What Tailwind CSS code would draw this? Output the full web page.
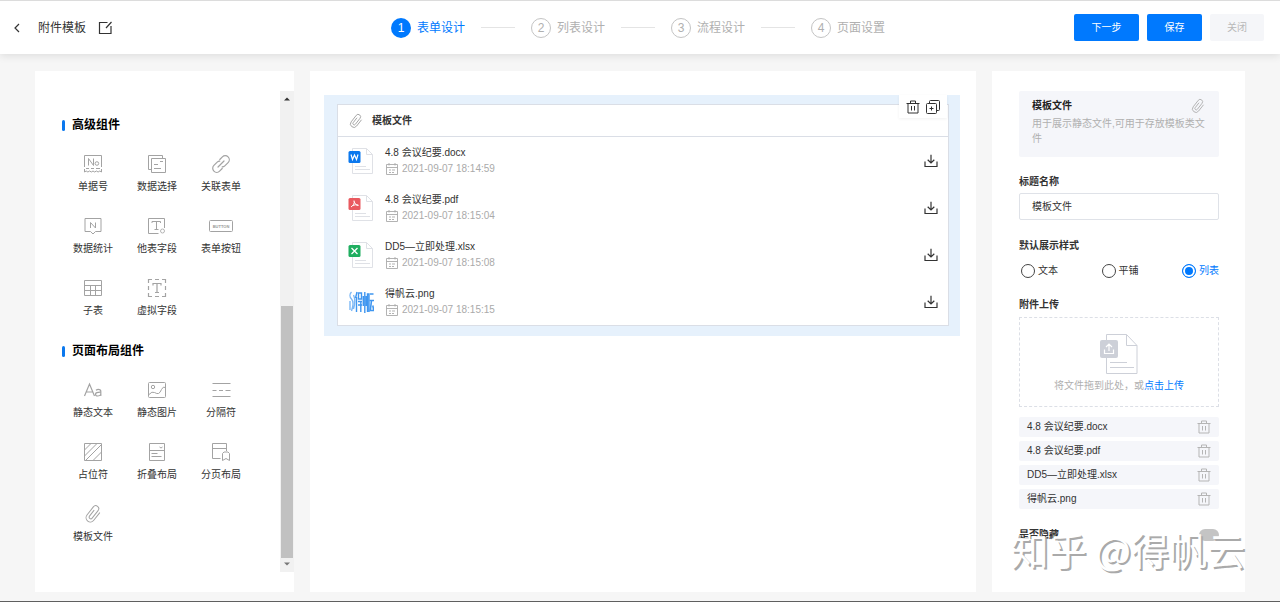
<!DOCTYPE html>
<html lang="zh-CN">
<head>
<meta charset="utf-8">
<meta name="viewport" content="width=device-width, initial-scale=1">
<title>附件模板 - 表单设计</title>
<script src="https://cdn.jsdelivr.net/npm/@tailwindcss/browser@4"></script>
</head>
<body class="flex min-h-screen flex-col border-t border-b border-t-[#dcdcdc] border-b-[#5f5f5f] bg-[#f6f6f6] font-['Liberation_Sans','Noto_Sans_CJK_SC',sans-serif] text-[10px] leading-4 text-[#333]">

<svg class="hidden" aria-hidden="true">
  <symbol id="clip" viewBox="0 0 20 20"><path transform="rotate(38 10 10)" d="M14.500 5v9.500a4.300 4.300 0 0 1-8.600 0V4.200a3 3 0 0 1 6 0v9.600a1.700 1.700 0 0 1-3.400 0V6.500" fill="none" stroke="currentColor" stroke-linecap="round"/></symbol>
  <symbol id="trash" viewBox="0 0 14 14"><path d="M.5 3.500h13M4.500 3.500v-2.500h5v2.500M2 3.500v9.500h10v-9.500M5.500 6v4.500M8.500 6v4.500" fill="none" stroke="currentColor"/></symbol>
  <symbol id="cal" viewBox="0 0 14 14"><path d="M1.500 2.500h11v10h-11zM1.500 5.500h11M4 1v2.500M10 1v2.500M4 8h2M7 8h3M4 10.500h2M7 10.500h2" fill="none" stroke="currentColor" stroke-width=".9"/></symbol>
  <symbol id="down" viewBox="0 0 14 14"><path d="M7 .8v7.700M3.700 5.800L7 9l3.300-3.200M1 7.500v5h12v-5" fill="none" stroke="currentColor" stroke-width="1.200"/></symbol>
  <symbol id="page" viewBox="0 0 26 28"><path d="M4.500 1.500h14l6 6v19h-20zM18.500 1.500v6h6M7 19.500h11M7 22.500h15" fill="#fff" stroke="#dfe1e6"/></symbol>
</svg>

<header class="grid h-[53px] shrink-0 grid-cols-[1fr_auto_1fr] items-center bg-white pl-3 pr-4 shadow-[0_2px_8px_rgba(0,0,0,0.1)]">
  <div class="flex items-center text-xs">
    <button type="button" aria-label="返回" class="py-1 pr-1"><svg class="size-2.5" viewBox="0 0 10 10" fill="none" stroke="#333" stroke-width="1.200"><path d="M7 1L3 5l4 4"/></svg></button>
    <h1 class="ml-3">附件模板</h1>
    <button type="button" aria-label="重命名" class="ml-3"><svg class="size-4" viewBox="0 0 16 16" fill="none" stroke="#333" stroke-width="1.200"><path d="M9.500 2.500h-8v11h11.500V6M8 8l5.500-6"/></svg></button>
  </div>
  <ol class="flex items-center gap-4 text-xs text-[#b0b0b0]">
    <li class="flex items-center gap-1.5 text-[#0079fe]"><span class="flex size-5 items-center justify-center rounded-full bg-[#0079fe] text-white">1</span>表单设计</li>
    <li aria-hidden="true" class="h-px w-[34px] bg-[#e4e4e4]"></li>
    <li class="flex items-center gap-1.5"><span class="flex size-5 items-center justify-center rounded-full border border-[#c4c4c4]">2</span>列表设计</li>
    <li aria-hidden="true" class="h-px w-[34px] bg-[#e4e4e4]"></li>
    <li class="flex items-center gap-1.5"><span class="flex size-5 items-center justify-center rounded-full border border-[#c4c4c4]">3</span>流程设计</li>
    <li aria-hidden="true" class="h-px w-[34px] bg-[#e4e4e4]"></li>
    <li class="flex items-center gap-1.5"><span class="flex size-5 items-center justify-center rounded-full border border-[#c4c4c4]">4</span>页面设置</li>
  </ol>
  <div class="flex items-center justify-end gap-2">
    <button type="button" class="h-[27px] w-[65px] rounded-xs bg-[#0079fe] text-white">下一步</button>
    <button type="button" class="h-[27px] w-[55px] rounded-xs bg-[#0079fe] text-white">保存</button>
    <button type="button" class="h-[27px] w-[54px] rounded-xs bg-[#f5f6f9] text-[#b8b8b8]">关闭</button>
  </div>
</header>

<main class="flex flex-1 gap-4 px-[35px] pt-[17px] pb-[9px]">

  <aside class="flex w-[259px] shrink-0 justify-between bg-white py-5">
    <div class="pt-6 pl-[26px]">
      <h2 class="flex h-5 items-center gap-[7px] pl-px text-xs font-bold text-black"><span class="h-[11px] w-[3px] rounded-xs bg-[#0b78ee]"></span>高级组件</h2>
      <ul class="mt-[19px] grid w-48 grid-cols-3 gap-y-[21px] text-center">
        <li class="flex flex-col items-center gap-[5px]"><svg class="size-5" viewBox="0 0 20 20" fill="none" stroke="#a3a3a3"><path d="M1.500 13V1.500h17V13M1.500 15v3q1.700-2 3.400 0 1.700-2 3.400 0 1.700-2 3.400 0 1.700-2 3.400 0 1.700-2 3.400 0V15M3 14.500h3M8 14.500h3M13 14.500h4M5.500 11.500V4.500l5 7V4.500"/><circle cx="13.900" cy="9.500" r="1.800"/></svg>单据号</li>
        <li class="flex flex-col items-center gap-[5px]"><svg class="size-5" viewBox="0 0 20 20" fill="none" stroke="#a3a3a3"><path d="M4.500 4.500h14v14h-14zM4.500 15.500h-3v-14h14v3M7 10.500h4M7 14.500h7M13 7.500h3"/></svg>数据选择</li>
        <li class="flex flex-col items-center gap-[5px]"><svg class="size-5" viewBox="0 0 20 20" fill="none" stroke="#a3a3a3" stroke-width="1.200" stroke-linecap="round"><path d="M8.800 5.500l2.600-2.600a4 4 0 0 1 5.700 5.700l-3.300 3.300a3.600 3.600 0 0 1-2.600 1M11.200 14.500l-2.600 2.600a4 4 0 0 1-5.700-5.700l3.300-3.300a3.600 3.600 0 0 1 2.600-1M7 13l6-6"/></svg>关联表单</li>
        <li class="flex flex-col items-center gap-[5px]"><svg class="size-5" viewBox="0 0 20 20" fill="none" stroke="#a3a3a3"><path d="M2 2.500h16v13h-5.500L10 18l-2.500-2.500H2zM7.500 12V6.500l5 5.500V6.500"/></svg>数据统计</li>
        <li class="flex flex-col items-center gap-[5px]"><svg class="size-5" viewBox="0 0 20 20" fill="none" stroke="#a3a3a3"><path d="M17.500 12V2.500h-16v15h10M5 7V5.500h8.500V7M9.500 5.500v8M7.500 13.500h4"/><circle cx="15.500" cy="15" r="2" stroke-width=".8"/></svg>他表字段</li>
        <li class="flex flex-col items-center gap-[5px]"><svg class="h-5 w-6" viewBox="0 0 24 20" fill="none" stroke="#a3a3a3"><rect x=".5" y="4.500" width="23" height="11" rx="1"/><text x="12" y="12" text-anchor="middle" font-size="4" font-weight="bold" fill="#999" stroke="none">BUTTON</text></svg>表单按钮</li>
        <li class="flex flex-col items-center gap-[5px]"><svg class="size-5" viewBox="0 0 20 20" fill="none" stroke="#a3a3a3"><path d="M1.500 2.500h17v15h-17zM1.500 7.500h17M1.500 12.500h17M7.500 7.500v10M12.500 7.500v10"/></svg>子表</li>
        <li class="flex flex-col items-center gap-[5px]"><svg class="size-5" viewBox="0 0 20 20" fill="none" stroke="#a3a3a3" stroke-width="1.200"><path d="M1.500 5V1.500H5M8 1.500h4M15 1.500h3.500V5M18.500 8v4M18.500 15v3.500H15M12 18.500H8M5 18.500H1.500V15M1.500 12V8M6 7.500V5.500h8v2M10 5.500v9M8 14.500h4"/></svg>虚拟字段</li>
      </ul>
      <h2 class="mt-[22px] flex h-5 items-center gap-[7px] pl-px text-xs font-bold text-black"><span class="h-[11px] w-[3px] rounded-xs bg-[#0b78ee]"></span>页面布局组件</h2>
      <ul class="mt-[19px] grid w-48 grid-cols-3 gap-y-[21px] text-center">
        <li class="flex flex-col items-center gap-[5px]"><svg class="size-5" viewBox="0 0 20 20" fill="none" stroke="#a3a3a3" stroke-width="1.200"><path d="M1.500 16L6.500 4 11.500 16M3.200 12h6.600M13 10.300q2.200-1.800 4.300-.3.500.6.500 1.500V16"/><path d="M17.800 12.200q-5.300-.2-5.300 2 0 1.800 2.300 1.800 2 0 3-1.500"/></svg>静态文本</li>
        <li class="flex flex-col items-center gap-[5px]"><svg class="size-5" viewBox="0 0 20 20" fill="none" stroke="#a3a3a3"><rect x="1.500" y="2.500" width="17" height="15" rx="1"/><circle cx="6" cy="7" r="1.700"/><path d="M2 14.500q3-3.500 5.500-2t4 1 3-4 4-2"/></svg>静态图片</li>
        <li class="flex flex-col items-center gap-[5px]"><svg class="size-5" viewBox="0 0 20 20" fill="none" stroke="#a3a3a3"><path d="M1.500 3.500h18M1.500 10.500h4M8 10.500h4M14.500 10.500h5M1.500 16.500h18"/></svg>分隔符</li>
        <li class="flex flex-col items-center gap-[5px]"><svg class="size-5" viewBox="0 0 20 20" fill="none" stroke="#a3a3a3"><path d="M1.500 1.500h17v17h-17zM1.500 8L8 1.500M1.500 14L14 1.500M3 18L18 3M10 18.500l8.500-8.500"/></svg>占位符</li>
        <li class="flex flex-col items-center gap-[5px]"><svg class="size-5" viewBox="0 0 20 20" fill="none" stroke="#a3a3a3"><path d="M2.500 1.500h15v17h-15zM2.500 8.500h15M12.500 5l1.500 1 1.500-1M4.500 11.500h6M4.500 14.500h10"/></svg>折叠布局</li>
        <li class="flex flex-col items-center gap-[5px]"><svg class="size-5" viewBox="0 0 20 20" fill="none" stroke="#a3a3a3"><path d="M9.500 16.500h-8v-15h14V9M1.500 6.500h14M11.500 18.500v-7l1.500-1.500h4l1.500 1.500v7l-3.500-2z"/></svg>分页布局</li>
        <li class="flex flex-col items-center gap-[5px]"><svg class="size-5 text-[#a3a3a3]"><use href="#clip"/></svg>模板文件</li>
      </ul>
    </div>
    <div aria-hidden="true" class="flex w-3.5 flex-col items-center bg-[#f1f1f1] py-1.5">
      <svg class="h-1 w-1.5" viewBox="0 0 6 4"><path d="M0 3.500L3 .5l3 3z" fill="#333"/></svg>
      <div class="mt-[205px] w-3 flex-1 bg-[#c1c1c1]"></div>
      <svg class="mt-1 h-1 w-1.5" viewBox="0 0 6 4"><path d="M0 .5l3 3 3-3z" fill="#777"/></svg>
    </div>
  </aside>

  <section class="min-w-0 flex-1 bg-white pt-6 pr-4 pl-3.5">
    <div class="relative bg-[#e6f1fc] pt-[9px] pr-[11px] pb-2.5 pl-[13px]">
      <div class="border border-[#dadee6] bg-white">
        <h3 class="flex h-8 items-center gap-2 border-b border-[#dadee6] pl-2.5 font-bold"><svg class="size-4 text-[#999]"><use href="#clip"/></svg>模板文件</h3>
        <ul>
          <li class="flex h-[47px] items-center pr-2.5 pl-2.5">
            <svg class="h-7 w-[26px]"><use href="#page"/><rect x=".5" y="4" width="12" height="12" rx="1.500" fill="#0b78ee"/><path d="M3 7.500l1.500 5 2-4.500 2 4.500 1.500-5" fill="none" stroke="#fff" stroke-width="1.200"/></svg>
            <div class="ml-[11px] flex-1"><p>4.8 会议纪要.docx</p><p class="flex items-center gap-[3px] text-[#aaa]"><svg class="size-3.5"><use href="#cal"/></svg>2021-09-07 18:14:59</p></div>
            <button type="button" aria-label="下载 4.8 会议纪要.docx"><svg class="size-3.5"><use href="#down"/></svg></button>
          </li>
          <li class="flex h-[47px] items-center pr-2.5 pl-2.5">
            <svg class="h-7 w-[26px]"><use href="#page"/><rect x=".5" y="4" width="12" height="12" rx="1.500" fill="#e95a60"/><path d="M6 6.500c1 3-1 5-3 6.500M6.200 7.500c.5 2 2 4 4.300 4M4.300 11.700q3-1.500 6-.7" fill="none" stroke="#fff"/></svg>
            <div class="ml-[11px] flex-1"><p>4.8 会议纪要.pdf</p><p class="flex items-center gap-[3px] text-[#aaa]"><svg class="size-3.5"><use href="#cal"/></svg>2021-09-07 18:15:04</p></div>
            <button type="button" aria-label="下载 4.8 会议纪要.pdf"><svg class="size-3.5"><use href="#down"/></svg></button>
          </li>
          <li class="flex h-[47px] items-center pr-2.5 pl-2.5">
            <svg class="h-7 w-[26px]"><use href="#page"/><rect x=".5" y="4" width="12" height="12" rx="1.500" fill="#1fae60"/><path d="M3.500 7l6 6M9.500 7l-6 6" fill="none" stroke="#fff" stroke-width="1.300"/></svg>
            <div class="ml-[11px] flex-1"><p>DD5—立即处理.xlsx</p><p class="flex items-center gap-[3px] text-[#aaa]"><svg class="size-3.5"><use href="#cal"/></svg>2021-09-07 18:15:08</p></div>
            <button type="button" aria-label="下载 DD5—立即处理.xlsx"><svg class="size-3.5"><use href="#down"/></svg></button>
          </li>
          <li class="flex h-[47px] items-center pr-2.5 pl-2.5">
            <svg class="h-7 w-[26px]" viewBox="0 0 26 28" fill="none" stroke="#3f96f0" stroke-width="1.400" role="img" aria-label="缩略图">
              <path d="M3.500 4c-2 2-2 5 0 7s2 6 0 12M5.500 7c1.500 3 1.500 9 0 14M2 13v9" stroke="#7db8f5"/>
              <path d="M9 4l-1.500 6M8.500 9v15M10.500 5h3v6h-3zM10 13.500h4M10 17h4M12.800 13v11M15.300 8v10M16.800 4v21M18.300 8v10M19.500 24V6h1.500v18"/>
              <path d="M22 6h3.500M21.500 12.500h4.500M23.500 12.500l-1.200 10h3.500l-1-5" stroke-width="1.600"/>
            </svg>
            <div class="ml-[11px] flex-1"><p>得帆云.png</p><p class="flex items-center gap-[3px] text-[#aaa]"><svg class="size-3.5"><use href="#cal"/></svg>2021-09-07 18:15:15</p></div>
            <button type="button" aria-label="下载 得帆云.png"><svg class="size-3.5"><use href="#down"/></svg></button>
          </li>
        </ul>
      </div>
      <div class="absolute top-0 right-[13px] flex h-[23px] w-12 items-center justify-center gap-1.5 bg-white shadow-[0_1px_3px_rgba(0,0,0,0.06)]">
        <button type="button" aria-label="删除组件"><svg class="size-3.5"><use href="#trash"/></svg></button>
        <button type="button" aria-label="复制组件"><svg class="size-3.5" viewBox="0 0 14 14" fill="none" stroke="#333"><path d="M3.500 3.500V1.500q0-1 1-1h8q1 0 1 1v8q0 1-1 1h-2"/><rect x=".5" y="3.500" width="10" height="10" rx="1"/><path d="M3.500 8.500h4M5.500 6.500v4"/></svg></button>
      </div>
    </div>
  </section>

  <aside class="relative w-[253px] shrink-0 bg-white px-[26px] pt-5 pl-[27px]">
    <div class="rounded-xs bg-[#f5f6fa] px-[13px] pt-[5px] pb-[11px]">
      <div class="flex h-5 items-center justify-between font-bold text-[#222]">模板文件<svg class="size-4 text-[#aaa]"><use href="#clip"/></svg></div>
      <p class="leading-[15px] text-[#b0b0b0]">用于展示静态文件,可用于存放模板类文件</p>
    </div>
    <label for="title" class="mt-[17px] block font-bold">标题名称</label>
    <input id="title" type="text" value="模板文件" class="mt-[3px] block h-[27px] w-full rounded-xs border border-[#dfe2e8] px-3 pb-0.5 text-[10px]">
    <fieldset class="mt-[18px]">
      <legend class="font-bold">默认展示样式</legend>
      <div class="mt-[9px] flex items-center justify-between pl-0.5">
        <label class="flex items-center gap-[3px]"><input type="radio" name="style" class="size-3.5 appearance-none rounded-full border border-[#444] checked:border-[#0079fe] checked:bg-[#0079fe] checked:shadow-[inset_0_0_0_2px_#fff]">文本</label>
        <label class="flex items-center gap-[3px]"><input type="radio" name="style" class="size-3.5 appearance-none rounded-full border border-[#444] checked:border-[#0079fe] checked:bg-[#0079fe] checked:shadow-[inset_0_0_0_2px_#fff]">平铺</label>
        <label class="flex items-center gap-[3px] text-[#0079fe]"><input type="radio" name="style" checked class="size-3.5 appearance-none rounded-full border border-[#444] checked:border-[#0079fe] checked:bg-[#0079fe] checked:shadow-[inset_0_0_0_2px_#fff]">列表</label>
      </div>
    </fieldset>
    <h3 class="mt-[18px] font-bold">附件上传</h3>
    <div class="mt-1 flex h-[90px] flex-col items-center border border-dashed border-[#dcdfe6] pt-4">
      <svg class="h-10 w-[38px]" viewBox="0 0 38 40" fill="none" stroke="#cdd0d8"><path d="M6.500.5h20l10.500 11v28H6.500zM26.500.5v11H37M10 28.500h17M10 33.500h24"/><rect x="0" y="6" width="18" height="18" rx="2" fill="#cdd0d8" stroke="none"/><path d="M9 17v-6.500M6 13l3-3 3 3M4.500 15.500v4h9v-4" stroke="#fff" stroke-width="1.200"/></svg>
      <p class="mt-1 text-[#b0b0b0]">将文件拖到此处，或<a href="#" class="text-[#0079fe]">点击上传</a></p>
    </div>
    <ul class="mt-2.5 flex flex-col gap-1">
      <li class="flex h-5 items-center justify-between rounded-xs bg-[#f5f6fa] px-2">4.8 会议纪要.docx<button type="button" aria-label="删除 4.8 会议纪要.docx" class="text-[#b5b5b5]"><svg class="size-3.5"><use href="#trash"/></svg></button></li>
      <li class="flex h-5 items-center justify-between rounded-xs bg-[#f5f6fa] px-2">4.8 会议纪要.pdf<button type="button" aria-label="删除 4.8 会议纪要.pdf" class="text-[#b5b5b5]"><svg class="size-3.5"><use href="#trash"/></svg></button></li>
      <li class="flex h-5 items-center justify-between rounded-xs bg-[#f5f6fa] px-2">DD5—立即处理.xlsx<button type="button" aria-label="删除 DD5—立即处理.xlsx" class="text-[#b5b5b5]"><svg class="size-3.5"><use href="#trash"/></svg></button></li>
      <li class="flex h-5 items-center justify-between rounded-xs bg-[#f5f6fa] px-2">得帆云.png<button type="button" aria-label="删除 得帆云.png" class="text-[#b5b5b5]"><svg class="size-3.5"><use href="#trash"/></svg></button></li>
    </ul>
    <label class="mt-[18px] flex items-center justify-between font-bold">是否隐藏<input type="checkbox" role="switch" class="h-3 w-5 appearance-none rounded-full bg-[#c4c4c4]"></label>
    <p class="absolute right-0 bottom-[15px] font-['Noto_Sans_CJK_SC',sans-serif] text-[38px] leading-[56px] whitespace-nowrap text-white [text-shadow:2px_2px_0_#aaa]">知乎 @得帆云</p>
  </aside>
</main>
</body>
</html>
